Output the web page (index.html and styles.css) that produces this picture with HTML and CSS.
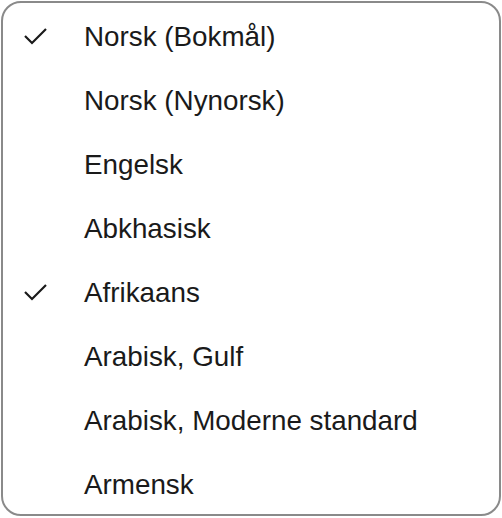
FILE: index.html
```html
<!DOCTYPE html>
<html lang="no">
<head>
<meta charset="utf-8">
<link rel="stylesheet" href="styles.css">
</head>
<body>
<div class="menu">
  <ul class="list">
    <li class="item"><span class="check"><svg viewBox="0 0 26 18" width="26" height="18"><polyline points="2,8 9,15 23,1" /></svg></span><span class="label">Norsk (Bokmål)</span></li>
    <li class="item"><span class="check"></span><span class="label">Norsk (Nynorsk)</span></li>
    <li class="item"><span class="check"></span><span class="label">Engelsk</span></li>
    <li class="item"><span class="check"></span><span class="label">Abkhasisk</span></li>
    <li class="item"><span class="check"><svg viewBox="0 0 26 18" width="26" height="18"><polyline points="2,8 9,15 23,1" /></svg></span><span class="label">Afrikaans</span></li>
    <li class="item"><span class="check"></span><span class="label">Arabisk, Gulf</span></li>
    <li class="item"><span class="check"></span><span class="label">Arabisk, Moderne standard</span></li>
    <li class="item"><span class="check"></span><span class="label">Armensk</span></li>
  </ul>
</div>
</body>
</html>
```
FILE: styles.css
```css
html, body {
  margin: 0;
  padding: 0;
  background: #ffffff;
}
body {
  font-family: "Liberation Sans", Arial, sans-serif;
  color: #1a1a1a;
}
.menu {
  box-sizing: border-box;
  margin: 1px;
  width: 500px;
  height: 515px;
  border: 2px solid #8a8a8a;
  border-radius: 20px;
  overflow: hidden;
  background: #fff;
}
.list {
  list-style: none;
  margin: 0;
  padding: 2px 0 0 0;
}
.item {
  display: flex;
  align-items: center;
  height: 64px;
}
.check {
  width: 81px;
  flex: 0 0 81px;
  display: flex;
  align-items: center;
  padding-left: 20px;
  box-sizing: border-box;
}
.check svg {
  display: block;
  fill: none;
  stroke: #1a1a1a;
  stroke-width: 2.2;
  stroke-linecap: butt;
  stroke-linejoin: miter;
}
.label {
  font-size: 27.8px;
  white-space: nowrap;
}
```
